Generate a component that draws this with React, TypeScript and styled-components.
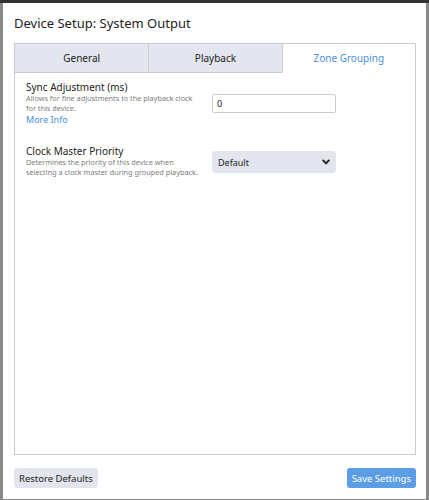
import React, { useState } from 'react';
import styled, { createGlobalStyle } from 'styled-components';

const GlobalStyle = createGlobalStyle`
  html, body {
    margin: 0;
    padding: 0;
    background: #7d7d7d;
    font-family: "Noto Sans", "Open Sans", sans-serif;
  }
`;

const tabs = ['General', 'Playback', 'Zone Grouping'];

const App: React.FC = () => {
  const [active, setActive] = useState(2);
  const [sync, setSync] = useState('0');

  return (
    <Backdrop>
      <GlobalStyle />
      <Modal>
        <Title>Device Setup: System Output</Title>
        <Panel>
          <TabBar>
            {tabs.map((t, i) => (
              <Tab key={t} $active={i === active} onClick={() => setActive(i)}>
                {t}
              </Tab>
            ))}
          </TabBar>
          <Body>
            <Setting>
              <Info>
                <Label>Sync Adjustment (ms)</Label>
                <Help>Allows for fine adjustments to the playback clock for this device.</Help>
                <Link href="#">More Info</Link>
              </Info>
              <Input $top={13} value={sync} onChange={(e) => setSync(e.target.value)} />
            </Setting>
            <Setting>
              <Info>
                <Label>Clock Master Priority</Label>
                <Help>Determines the priority of this device when selecting a clock master during grouped playback.</Help>
              </Info>
              <Select>
                <span>Default</span>
                <svg width="8" height="8" viewBox="0 0 10 10">
                  <path d="M1.5 3 L5 6.8 L8.5 3" fill="none" stroke="#222" strokeWidth="2.4" strokeLinecap="round" strokeLinejoin="round" />
                </svg>
              </Select>
            </Setting>
          </Body>
        </Panel>
        <Footer>
          <Button>Restore Defaults</Button>
          <Button $primary>Save Settings</Button>
        </Footer>
      </Modal>
    </Backdrop>
  );
};

const Backdrop = styled.div`
  height: 500px;
  padding: 3px 3px 1px 3px;
  box-sizing: border-box;
  background: linear-gradient(#333 0, #333 3px, #8a8a8a 3px);
`;

const Modal = styled.div`
  height: 496px;
  background: #fff;
  box-sizing: border-box;
  padding: 0 10px 0 11px;
  display: flex;
  flex-direction: column;
`;

const Title = styled.h1`
  margin: 0;
  padding: 10px 0 0 0;
  height: 40px;
  box-sizing: border-box;
  font-size: 13px;
  font-weight: 400;
  color: #222;
  line-height: 20px;
`;

const Panel = styled.div`
  height: 410px;
  border: 1px solid #c9ccd3;
  display: flex;
  flex-direction: column;
`;

const TabBar = styled.div`
  display: grid;
  grid-template-columns: 1fr 1fr 1fr;
  height: 29px;
`;

const Tab = styled.div<{ $active?: boolean }>`
  display: flex;
  align-items: center;
  justify-content: center;
  font-size: 10px;
  color: ${(p) => (p.$active ? '#4a8fd8' : '#222')};
  background: ${(p) => (p.$active ? '#fff' : '#e3e6ee')};
  border-left: 1px solid #c9ccd3;
  border-bottom: 1px solid ${(p) => (p.$active ? 'transparent' : '#c9ccd3')};
  cursor: pointer;
  &:first-child {
    border-left: none;
  }
`;

const Body = styled.div`
  padding: 8px 11px;
  display: flex;
  flex-direction: column;
  gap: 19px;
`;

const Setting = styled.div`
  display: grid;
  grid-template-columns: 186px 124px;
  align-items: start;
`;

const Info = styled.div`
  display: flex;
  flex-direction: column;
`;

const Label = styled.div`
  font-size: 10px;
  color: #222;
  line-height: 13px;
`;

const Help = styled.div`
  font-size: 7.3px;
  color: #7c7c7c;
  line-height: 9.5px;
  padding-right: 8px;
`;

const Link = styled.a`
  font-size: 9px;
  color: #4a8fd8;
  text-decoration: none;
  line-height: 13px;
`;

const Input = styled.input<{ $top: number }>`
  margin-top: ${(p) => p.$top}px;
  height: 19px;
  box-sizing: border-box;
  border: 1px solid #c9ccd3;
  border-radius: 2px;
  padding: 0 4px;
  font-family: inherit;
  font-size: 9px;
  color: #222;
  outline: none;
`;

const Select = styled.div`
  margin-top: 6px;
  height: 22px;
  border-radius: 3px;
  background: #e2e5ee;
  display: flex;
  align-items: center;
  justify-content: space-between;
  padding: 0 6px 0 6px;
  font-size: 9px;
  color: #222;
`;

const Footer = styled.div`
  display: flex;
  justify-content: space-between;
  padding-top: 13px;
`;

const Button = styled.button<{ $primary?: boolean }>`
  height: 20px;
  padding: 0 5px;
  border: none;
  border-radius: 3px;
  font-family: inherit;
  font-size: 9.5px;
  color: ${(p) => (p.$primary ? '#fff' : '#222')};
  background: ${(p) => (p.$primary ? '#5b9ee6' : '#e2e5ee')};
  cursor: pointer;
`;

export default App;
